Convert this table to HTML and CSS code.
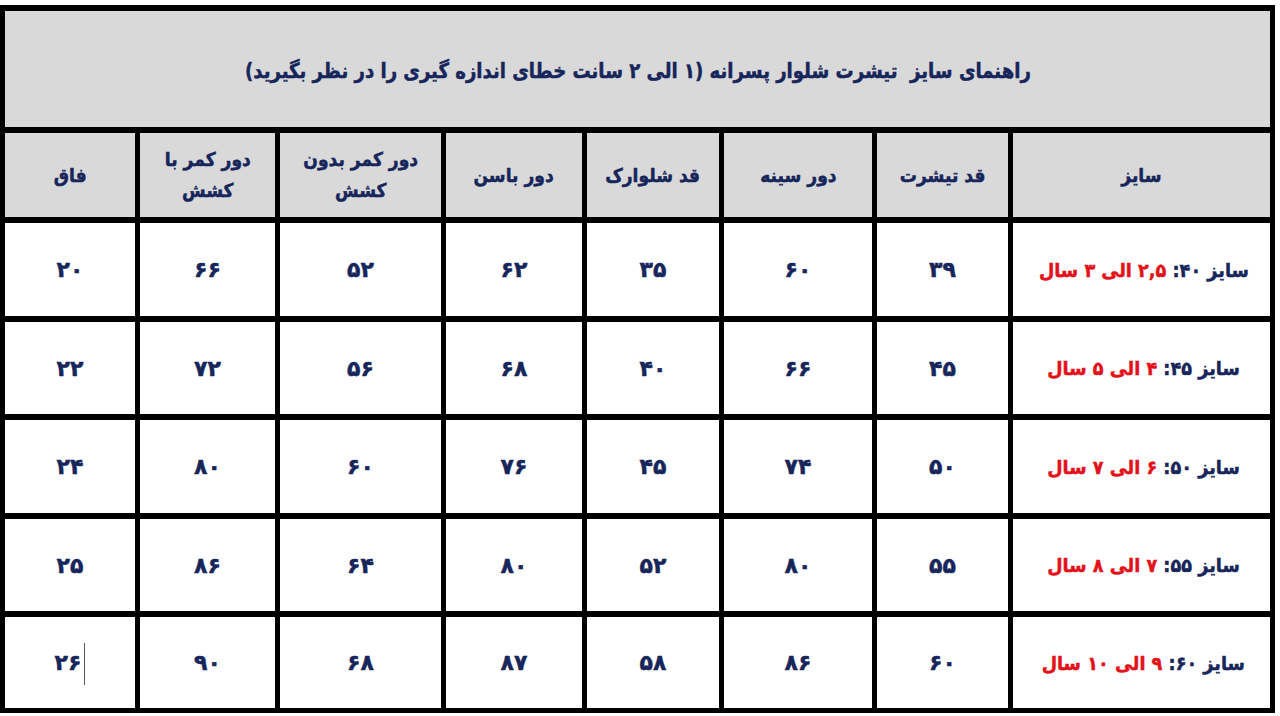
FILE: index.html
```html
<!DOCTYPE html>
<html lang="fa" dir="rtl">
<head>
<meta charset="utf-8">
<title>راهنمای سایز</title>
<link rel="stylesheet" href="styles.css">
</head>
<body>
<div class="sheet">
  <div class="grid">
    <div class="cell title"><span class="txt">راهنمای سایز&nbsp; تیشرت شلوار پسرانه (۱ الی ۲ سانت خطای اندازه گیری را در نظر بگیرید)</span></div>

    <div class="cell head"><span class="txt">سایز</span></div>
    <div class="cell head"><span class="txt">قد تیشرت</span></div>
    <div class="cell head"><span class="txt">دور سینه</span></div>
    <div class="cell head"><span class="txt">قد شلوارک</span></div>
    <div class="cell head"><span class="txt">دور باسن</span></div>
    <div class="cell head"><span class="txt">دور کمر بدون<br>کشش</span></div>
    <div class="cell head"><span class="txt">دور کمر با<br>کشش</span></div>
    <div class="cell head"><span class="txt">فاق</span></div>

    <div class="cell size"><span class="txt">سایز ۴۰: <span class="red">۲,۵ الی ۳ سال</span></span></div>
    <div class="cell num">۳۹</div>
    <div class="cell num">۶۰</div>
    <div class="cell num">۳۵</div>
    <div class="cell num">۶۲</div>
    <div class="cell num">۵۲</div>
    <div class="cell num">۶۶</div>
    <div class="cell num">۲۰</div>

    <div class="cell size"><span class="txt">سایز ۴۵: <span class="red">۴ الی ۵ سال</span></span></div>
    <div class="cell num">۴۵</div>
    <div class="cell num">۶۶</div>
    <div class="cell num">۴۰</div>
    <div class="cell num">۶۸</div>
    <div class="cell num">۵۶</div>
    <div class="cell num">۷۲</div>
    <div class="cell num">۲۲</div>

    <div class="cell size"><span class="txt">سایز ۵۰: <span class="red">۶ الی ۷ سال</span></span></div>
    <div class="cell num">۵۰</div>
    <div class="cell num">۷۴</div>
    <div class="cell num">۴۵</div>
    <div class="cell num">۷۶</div>
    <div class="cell num">۶۰</div>
    <div class="cell num">۸۰</div>
    <div class="cell num">۲۴</div>

    <div class="cell size"><span class="txt">سایز ۵۵: <span class="red">۷ الی ۸ سال</span></span></div>
    <div class="cell num">۵۵</div>
    <div class="cell num">۸۰</div>
    <div class="cell num">۵۲</div>
    <div class="cell num">۸۰</div>
    <div class="cell num">۶۴</div>
    <div class="cell num">۸۶</div>
    <div class="cell num">۲۵</div>

    <div class="cell size"><span class="txt">سایز ۶۰: <span class="red">۹ الی ۱۰ سال</span></span></div>
    <div class="cell num">۶۰</div>
    <div class="cell num">۸۶</div>
    <div class="cell num">۵۸</div>
    <div class="cell num">۸۷</div>
    <div class="cell num">۶۸</div>
    <div class="cell num">۹۰</div>
    <div class="cell num"><span class="caret"></span><span>۲۶</span></div>
  </div>
</div>
</body>
</html>
```

FILE: styles.css
```css
html, body {
  margin: 0;
  padding: 0;
  background: #ffffff;
}

body {
  width: 1280px;
  height: 716px;
  overflow: hidden;
  font-family: "DejaVu Sans", "Noto Sans", sans-serif;
  font-weight: bold;
  color: #16255a;
}

.sheet {
  padding-top: 5px;
  direction: ltr;
}

.grid {
  direction: rtl;
  width: 1275px;
  box-sizing: border-box;
  background: #000000;
  display: grid;
  grid-template-columns: 257px 131px 148px 132px 136px 161px 135px 130px;
  grid-template-rows: 116px 84px 93px 92px 93px 92px 91px;
  column-gap: 5px;
  row-gap: 6px;
  padding: 6px 5px 5px 5px;
}

.cell {
  background: #ffffff;
  display: flex;
  align-items: center;
  justify-content: center;
  text-align: center;
  -webkit-text-stroke: 0.5px currentColor;
}

.txt {
  display: inline-block;
  white-space: nowrap;
}

.title {
  grid-column: 1 / -1;
  background: #d9d9d9;
  font-size: 21px;
  padding-top: 4px;
  box-sizing: border-box;
}

.title .txt {
  transform: scaleX(0.86);
}

.head {
  background: #d9d9d9;
  font-size: 19px;
  line-height: 31px;
}

.head .txt {
  transform: scaleX(0.9);
}

.num {
  font-size: 22px;
  letter-spacing: -2px;
}

.size {
  font-size: 19px;
  padding-left: 4px;
}

.size .txt {
  transform: scaleX(0.93);
}

.red {
  color: #e3121a;
}

.caret {
  display: inline-block;
  width: 1px;
  height: 42px;
  background: #555555;
  margin-left: 3px;
  margin-top: 2px;
  -webkit-text-stroke: 0;
}
```
